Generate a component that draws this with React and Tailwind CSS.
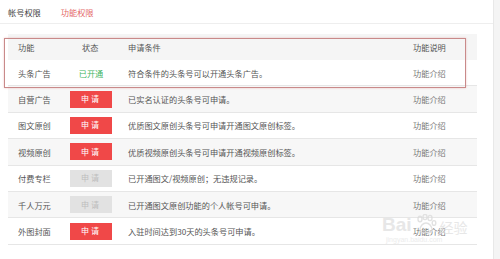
import React from "react";

const rows = [
  { name: "头条广告", status: "open", cond: "符合条件的头条号可以开通头条广告。" },
  { name: "自营广告", status: "red", cond: "已实名认证的头条号可申请。" },
  { name: "图文原创", status: "red", cond: "优质图文原创头条号可申请开通图文原创标签。" },
  { name: "视频原创", status: "red", cond: "优质视频原创头条号可申请开通视频原创标签。" },
  { name: "付费专栏", status: "gray", cond: "已开通图文/视频原创；无违规记录。" },
  { name: "千人万元", status: "gray", cond: "已开通图文原创功能的个人帐号可申请。" },
  { name: "外图封面", status: "red", cond: "入驻时间达到30天的头条号可申请。" },
];

function Status({ s }) {
  if (s === "open")
    return <span className="flex w-[42px] justify-center text-[#3fb55f]">已开通</span>;
  if (s === "red")
    return (
      <span className="flex h-[17px] w-[42px] items-center justify-center bg-[#f04848] text-[8px] text-white tracking-[2px]">
        申请
      </span>
    );
  return (
    <span className="flex h-[17px] w-[42px] items-center justify-center bg-[#e2e2e2] text-[8px] text-[#bdbdbd] tracking-[2px]">
      申请
    </span>
  );
}

function Paw() {
  return (
    <svg width="22" height="20" viewBox="0 0 22 20" fill="none" stroke="#dcdcdc" strokeWidth="1.4">
      <ellipse cx="5" cy="5" rx="2" ry="2.8" />
      <ellipse cx="10" cy="3" rx="2" ry="2.6" />
      <ellipse cx="15" cy="4" rx="2" ry="2.6" />
      <ellipse cx="19" cy="9" rx="1.8" ry="2.4" />
      <path d="M5 16c0-4 3-7 6-7s6 3 6 7c0 2-2 3-4 2.5-1.5-.4-2.5-.4-4 0C7 19 5 18 5 16z" />
    </svg>
  );
}

export default function App() {
  return (
    <div
      className="relative h-[259px] w-[500px] overflow-hidden bg-[#f4f4f4] text-[8.2px] text-[#555]"
      style={{ fontFamily: '"Noto Sans CJK SC", "Liberation Sans", sans-serif' }}
    >
      <div className="h-full w-[494px] border-r border-[#e8e8e8] bg-white">
        <div className="flex h-[24px] items-center gap-[20px] border-b border-[#eeeeee] pl-[8px] pt-[1px]">
          <span className="text-[#444]">帐号权限</span>
          <span className="text-[#e46a6a]">功能权限</span>
        </div>
        <div className="ml-[8px] mt-[10px] w-[469px]">
          <div className="flex h-[26px] items-center bg-[#f5f5f5] text-[#555]">
            <div className="w-[74px] pl-[10px]">功能</div>
            <div className="w-[46px]">状态</div>
            <div className="flex-1">申请条件</div>
            <div className="w-[64px]">功能说明</div>
          </div>
          {rows.map((r, i) => (
            <div
              key={r.name}
              className={`flex h-[26.4px] items-center border-b border-[#e6e6e6] ${i % 2 === 1 ? "bg-[#f7f7f7]" : "bg-white"}`}
            >
              <div className="w-[62px] pl-[10px]">{r.name}</div>
              <div className="w-[58px]">
                <Status s={r.status} />
              </div>
              <div className="flex-1">{r.cond}</div>
              <div className="w-[64px] text-[#777]">功能介绍</div>
            </div>
          ))}
        </div>
      </div>
      <div className="absolute left-[4px] top-[38px] h-[50px] w-[462px] border border-[#c98a8a] shadow-[0_0_2px_rgba(220,120,120,0.4)]" />
      <div className="pointer-events-none absolute left-[382px] top-[214px] flex items-end gap-[3px] text-[#e2e2e2] opacity-80">
        <span className="text-[19px] font-bold leading-none" style={{ fontFamily: '"Liberation Sans", sans-serif' }}>Bai</span>
        <Paw />
        <span className="text-[14px] leading-none">经验</span>
      </div>
      <div className="pointer-events-none absolute left-[386px] top-[236px] text-[7px] leading-none text-[#ececec]" style={{ fontFamily: '"Liberation Sans", sans-serif' }}>
        jingyan.baidu.com
      </div>
    </div>
  );
}
